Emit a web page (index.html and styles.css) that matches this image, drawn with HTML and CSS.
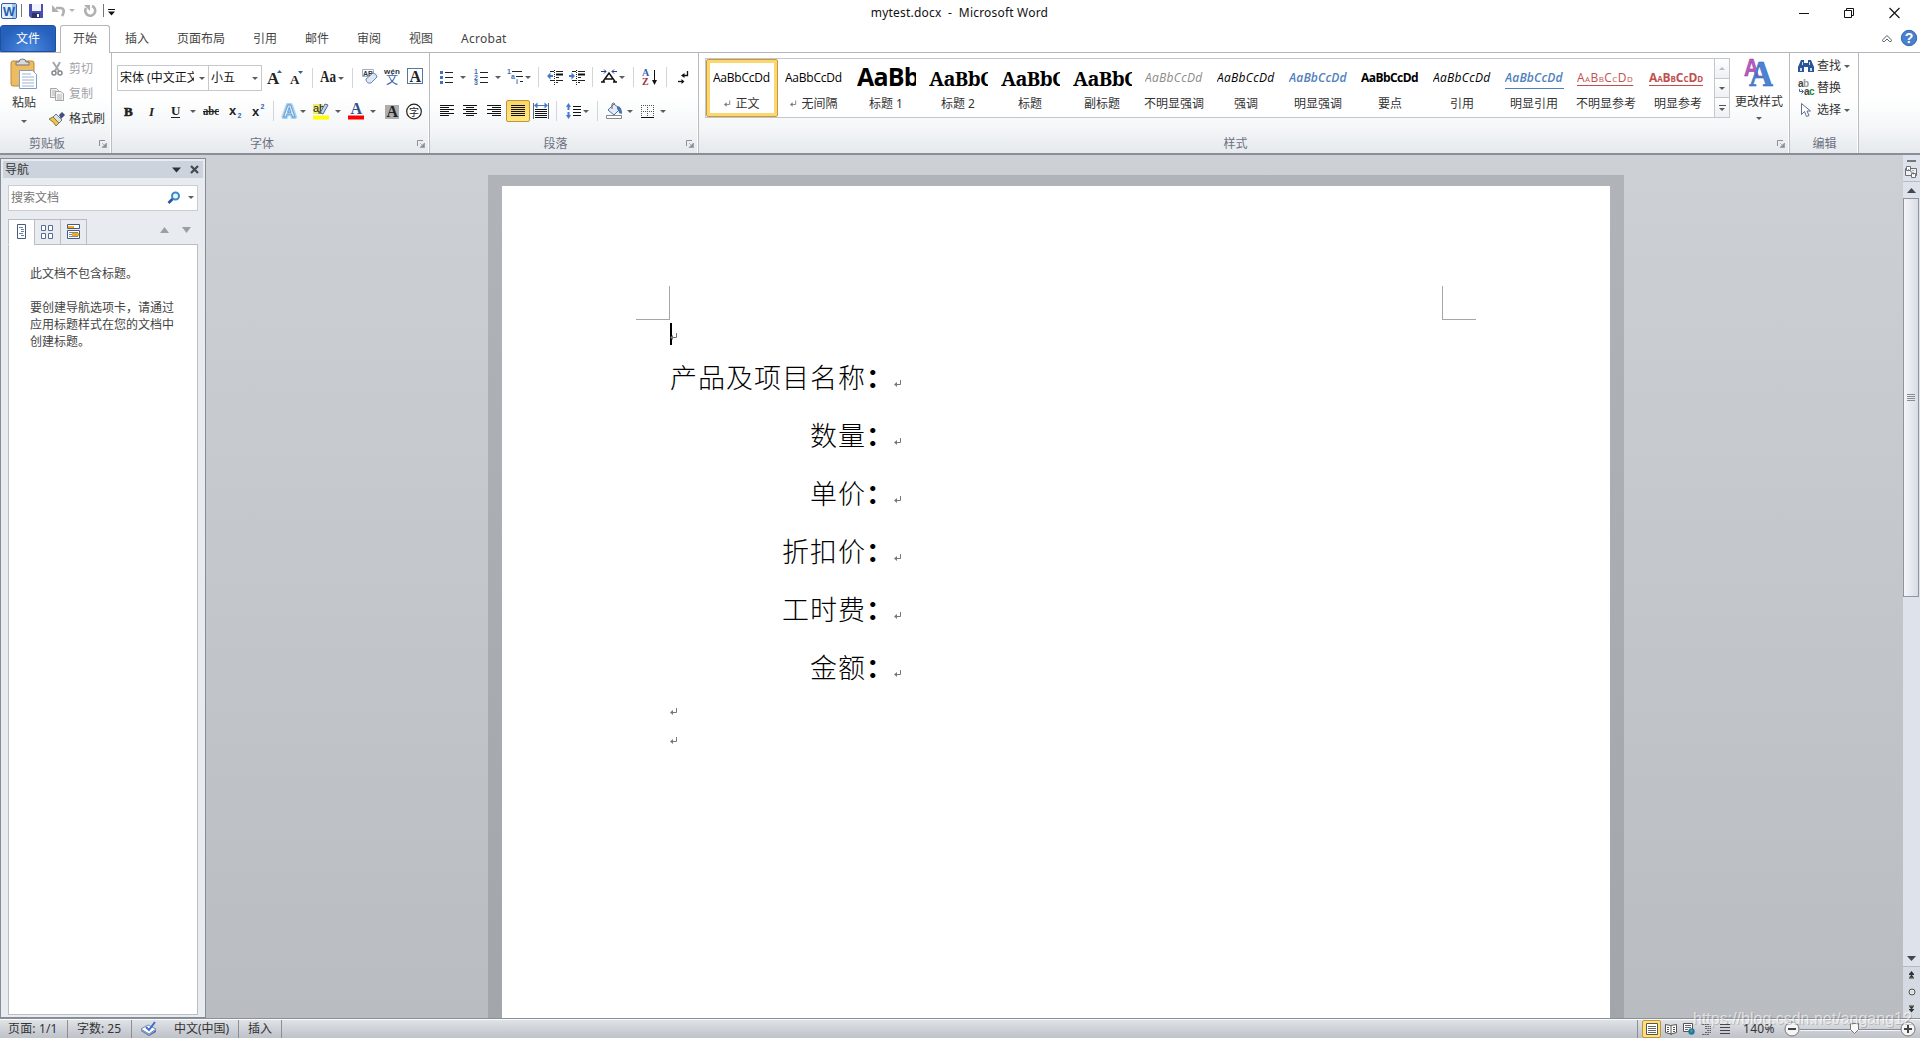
FILE: index.html
```html
<!DOCTYPE html>
<html lang="zh-CN">
<head>
<meta charset="utf-8">
<title>mytest.docx - Microsoft Word</title>
<link rel="stylesheet" href="styles.css">
</head>
<body>
<div class="app">
  <header class="titlebar">
    <div class="quick">
      <svg width="20" height="20" viewBox="0 0 20 20"><rect x="1.5" y="3.5" width="15" height="15" rx="1.5" fill="#e4effb" stroke="#2b5fad"/><path d="M12 4v14h4V4z" fill="#9ec3ec"/><text x="3" y="16" class="g-word" textLength="12" lengthAdjust="spacingAndGlyphs">W</text></svg>
      <i class="qsep"></i>
      <svg width="16" height="20" viewBox="0 0 16 20"><path d="M1 4h14v14H3l-2-2z" fill="#4a4fb4"/><path d="M4 4h9v7H4z" fill="#f2f4fc"/><path d="M4 13h8v5H4z" fill="#2f3269"/><path d="M9 14h2v3H9z" fill="#fff"/></svg>
      <svg width="16" height="20" viewBox="0 0 16 20"><path d="M5 8h4c4 0 5 3 2 8" fill="none" stroke="#b0b0b0" stroke-width="2.6"/><path d="M1 5v7h7z" fill="#b0b0b0"/></svg>
      <i class="dd pale"></i>
      <svg width="14" height="20" viewBox="0 0 14 20"><path d="M9 6a5 5 0 1 1-6 2" fill="none" stroke="#b0b0b0" stroke-width="2.6"/><path d="M1 5h6v6z" fill="#b0b0b0"/></svg>
      <i class="qsep"></i>
      <svg width="8" height="20" viewBox="0 0 8 20"><path d="M0 9.500h7" stroke="#111"/><path d="M0 11.500h7l-3.500 4z" fill="#111"/></svg>
    </div>
    <div class="title">mytest.docx&nbsp; -&nbsp; Microsoft Word</div>
    <div class="winbtns">
      <svg width="12" height="20" viewBox="0 0 12 20"><path d="M0 14.500h10" stroke="#111"/></svg>
      <svg width="12" height="20" viewBox="0 0 12 20"><path d="M.5 11.500h7v7h-7zM2.500 11v-1.500h7v7H8" fill="none" stroke="#111"/></svg>
      <svg width="12" height="20" viewBox="0 0 12 20"><path d="M.5 9l10 10M10.500 9l-10 10" stroke="#111" stroke-width="1.1"/></svg>
    </div>
  </header>

  <nav class="tabs">
    <span class="file">文件</span><span class="tab active">开始</span><span class="tab">插入</span><span class="tab">页面布局</span><span class="tab">引用</span><span class="tab">邮件</span><span class="tab">审阅</span><span class="tab">视图</span><span class="tab acro">Acrobat</span>
    <svg class="collapse" width="12" height="12" viewBox="0 0 12 12"><path d="M2 8.500q-1-1 0-2L6 2.500l4 4q1 1 0 2l-1.500 0L6 6 3.500 8.500z" fill="#fff" stroke="#555b66"/></svg>
    <svg class="help" width="18" height="18" viewBox="0 0 18 18"><circle cx="9" cy="9" r="7.700" fill="#4b80cf" stroke="#3567b4"/><text x="9" y="14" class="g-help">?</text></svg>
  </nav>

  <section class="ribbon">
    <div class="group clip">
      <div class="body">
        <div class="paste">
          <svg width="28" height="32" viewBox="0 0 28 32"><rect x="1" y="3" width="23" height="25" rx="2" fill="#eebc60" stroke="#b98a38"/><path d="M6 7V4h3q0-3 3.500-3T16 4h3v3z" fill="#d8dade" stroke="#70757c"/><path d="M9.500 12.500h13l4 4V30.500h-17z" fill="#fff" stroke="#7e9cc4"/><path d="M12 16h9M12 19h12M12 22h12M12 25h12M12 28h12" stroke="#9fb4d2"/></svg>
          <span>粘贴</span><i class="dd"></i>
        </div>
        <div class="clipcol">
          <div class="line off"><svg width="16" height="16" viewBox="0 0 16 16"><path d="M4 1l6 9M11 1L6 10" stroke="#a4a7ac" stroke-width="2"/><circle cx="5" cy="12" r="2" fill="none" stroke="#85888d" stroke-width="1.500"/><circle cx="11" cy="12" r="2" fill="none" stroke="#85888d" stroke-width="1.500"/></svg>剪切</div>
          <div class="line off"><svg width="16" height="16" viewBox="0 0 16 16"><path d="M1.500 2.500h6l2 2v7h-8z" fill="#eee" stroke="#a5a5a5"/><path d="M3 5h4M3 7h4M3 9h4" stroke="#b5b5b5"/><path d="M6.500 5.500h5l3 2v7h-8z" fill="#f4f4f4" stroke="#a5a5a5"/><path d="M8 9h5M8 11h5M8 13h5" stroke="#b5b5b5"/></svg>复制</div>
          <div class="line"><svg width="16" height="16" viewBox="0 0 16 16"><path d="M10 4l3-3 3 3-4 4z" fill="#454c80"/><path d="M7 3l6 6-3 3-6-6z" fill="#dce1ea" stroke="#777"/><path d="M4 6l6 6-3 3Q5 11 0 8z" fill="#e9c44d" stroke="#8d7a38"/></svg>格式刷</div>
        </div>
      </div>
      <div class="foot"><span>剪贴板</span><svg class="launch" width="8" height="8"><use href="#launch"/></svg></div>
    </div>

    <div class="group font">
      <div class="body rows">
        <div class="row fr1">
          <div class="combo c1"><span>宋体 (中文正文)</span><i class="dd"></i></div>
          <div class="combo c2"><span>小五</span><i class="dd"></i></div>
          <svg width="18" height="20" viewBox="0 0 18 20"><text x="0" y="16" class="g-serif s18">A</text><path d="M10 5h5l-2.500-3z" fill="#345e9e"/></svg>
          <svg width="16" height="20" viewBox="0 0 16 20"><text x="0" y="16" class="g-serif s13">A</text><path d="M8 3h5l-2.500 3z" fill="#345e9e"/></svg>
          <i class="vsep"></i>
          <svg width="18" height="20" viewBox="0 0 18 20"><text x="0" y="14" class="g-serif s15" textLength="16" lengthAdjust="spacingAndGlyphs">Aa</text></svg>
          <i class="dd"></i><i class="vsep"></i>
          <svg width="18" height="20" viewBox="0 0 18 20"><path d="M1.500 1.500h11v7h-11z" fill="#fff" stroke="#9dafca"/><text x="2" y="7.500" class="g-tiny dark">AB</text><path d="M5 11l7-6q4 1 4 4l-6 6q-4 1-5-3z" fill="#dde7f6" stroke="#6b86ae"/></svg>
          <svg width="18" height="20" viewBox="0 0 18 20"><text x="0" y="6" class="g-wen" textLength="16">wén</text><text x="2" y="16" class="g-cn blue">文</text></svg>
          <svg width="17" height="20" viewBox="0 0 17 20"><rect x=".5" y=".500" width="15" height="15" fill="#fff" stroke="#55789e"/><text x="2.500" y="13.500" class="g-serif s15">A</text></svg>
        </div>
        <div class="row fr2">
          <svg width="14" height="20" viewBox="0 0 14 20"><text x="0" y="15" class="g-serif s13 heavy">B</text></svg>
          <svg width="14" height="20" viewBox="0 0 14 20"><text x="2" y="15" class="g-serif s13 it">I</text></svg>
          <svg width="14" height="20" viewBox="0 0 14 20"><text x="0" y="14" class="g-serif s12">U</text><path d="M0 16.500h9" stroke="#222"/></svg>
          <i class="dd"></i>
          <svg width="18" height="20" viewBox="0 0 18 20"><text x="0" y="14" class="g-serif s11" textLength="16" lengthAdjust="spacingAndGlyphs">abc</text><path d="M0 10.500h16" stroke="#222"/></svg>
          <svg width="16" height="20" viewBox="0 0 16 20"><text x="0" y="14" class="g-x">x</text><text x="8.500" y="17" class="g-tiny blue">2</text></svg>
          <svg width="16" height="20" viewBox="0 0 16 20"><text x="0" y="15" class="g-x">x</text><text x="8.500" y="8" class="g-tiny blue">2</text></svg>
          <i class="vsep"></i>
          <svg width="16" height="20" viewBox="0 0 16 20"><text x="0" y="16" class="g-glow outer">A</text><text x="0" y="16" class="g-glow inner">A</text></svg>
          <i class="dd"></i>
          <svg width="18" height="20" viewBox="0 0 18 20"><path d="M0 3h10v10H0z" fill="#eeea78"/><text x="0" y="11" class="g-ab">ab</text><path d="M7 12l5-9 3 1-5 9z" fill="#c4d4ec" stroke="#496b9d"/><path d="M5 13l1-3 3 2z" fill="#555"/><path d="M0 14.500h16v4H0z" fill="#ff0"/></svg>
          <i class="dd"></i>
          <svg width="18" height="20" viewBox="0 0 18 20"><text x="2.500" y="13" class="g-serif s15 navy">A</text><path d="M0 14.500h16v4H0z" fill="#f00"/></svg>
          <i class="dd"></i>
          <svg width="16" height="20" viewBox="0 0 16 20"><path d="M0 4h14v14H0z" fill="#adadad"/><text x="1.500" y="16" class="g-serif s15">A</text></svg>
          <svg width="17" height="20" viewBox="0 0 17 20"><circle cx="8" cy="10.500" r="7.300" fill="#fff" stroke="#222" stroke-width="1.200"/><text x="3" y="14.500" class="g-cn s10">字</text></svg>
        </div>
      </div>
      <div class="foot"><span>字体</span><svg class="launch" width="8" height="8"><use href="#launch"/></svg></div>
    </div>

    <div class="group para">
      <div class="body rows">
        <div class="row pr1">
          <svg width="16" height="20" viewBox="0 0 16 20"><path d="M5 5.500h8M5 10.500h8M5 15.500h8" stroke="#222"/><path d="M0 4h3v3H0zM0 9h3v3H0zM0 14h3v3H0z" fill="#4472b8"/></svg>
          <i class="dd"></i>
          <svg width="16" height="20" viewBox="0 0 16 20"><path d="M6 5.500h8M6 10.500h8M6 15.500h8" stroke="#222"/><text x="0" y="7" class="g-num">1</text><text x="0" y="12.500" class="g-num">2</text><text x="0" y="18" class="g-num">3</text></svg>
          <i class="dd"></i>
          <svg width="17" height="20" viewBox="0 0 17 20"><path d="M5 4.500h10M9 9.500h7M13 14.500h3" stroke="#222"/><text x="0" y="7" class="g-num">1</text><text x="4" y="12" class="g-num">a</text><text x="9" y="17" class="g-num">i</text></svg>
          <i class="dd"></i><i class="vsep"></i>
          <svg width="17" height="20" viewBox="0 0 17 20"><path d="M3 4.500h4M9 4.500h7M9 10.500h3M3 13.500h4M9 13.500h7M9 15.500h2" stroke="#222"/><path d="M9 7.500h7" stroke="#111" stroke-width="2"/><path d="M7.500 3v16" stroke="#222" stroke-dasharray="1 1"/><path d="M0 9l3.500-3.500V8H6v2H3.500v2.500z" fill="#4478cc"/></svg>
          <svg width="17" height="20" viewBox="0 0 17 20"><path d="M3 4.500h4M9 4.500h7M9 10.500h3M3 13.500h4M9 13.500h7M9 15.500h2" stroke="#222"/><path d="M9 7.500h7" stroke="#111" stroke-width="2"/><path d="M7.500 3v16" stroke="#222" stroke-dasharray="1 1"/><path d="M6 9L2.500 5.500V8H0v2h2.500v2.500z" fill="#4478cc"/></svg>
          <i class="vsep"></i>
          <svg width="17" height="20" viewBox="0 0 17 20"><path d="M0 15h4M12 15h4M2 14.500L8 6l6 8.500M4.500 12h7" fill="none" stroke="#111" stroke-width="1.500"/><path d="M0 4.500h5M3 2.500l2 2-2 2M16 4.500h-5M13 2.500l-2 2 2 2" fill="none" stroke="#27398b"/></svg>
          <i class="dd"></i><i class="vsep"></i>
          <svg width="17" height="20" viewBox="0 0 17 20"><text x="0" y="9" class="g-az blue">A</text><text x="0" y="18" class="g-az red">Z</text><path d="M12.500 3v12" stroke="#111"/><path d="M10 13h5l-2.500 5z" fill="#111"/></svg>
          <i class="vsep"></i>
          <svg width="14" height="20" viewBox="0 0 14 20"><path d="M9.500 4v4.500H6" fill="none" stroke="#111" stroke-width="1.300"/><path d="M6.500 6v5L3 8.500zM3.500 12l3 2.500-3 2.500z" fill="#111"/><path d="M0 14.500h4" stroke="#111" stroke-width="1.300"/></svg>
        </div>
        <div class="row pr2">
          <svg width="16" height="20" viewBox="0 0 16 20"><path d="M0 4.500h14M0 6.500h9M0 8.500h14M0 10.500h9M0 12.500h14M0 14.500h9" stroke="#111"/></svg>
          <svg width="16" height="20" viewBox="0 0 16 20"><path d="M0 4.500h14M3 6.500h8M0 8.500h14M3 10.500h8M0 12.500h14M3 14.500h8" stroke="#111"/></svg>
          <svg width="16" height="20" viewBox="0 0 16 20"><path d="M0 4.500h14M5 6.500h9M0 8.500h14M5 10.500h9M0 12.500h14M5 14.500h9" stroke="#111"/></svg>
          <span class="pressed"><svg width="14" height="20" viewBox="0 0 14 20"><path d="M0 4.500h14M0 6.500h14M0 8.500h14M0 10.500h14M0 12.500h14M0 14.500h14" stroke="#111"/></svg></span>
          <svg width="17" height="20" viewBox="0 0 17 20"><path d="M.5 2v16M15.500 2v16" stroke="#5c6878"/><path d="M2 8.500h12M2 10.500h12M2 12.500h12M2 14.500h12M2 16.500h12" stroke="#111"/><path d="M1 4.500L4.500 1.500V4h7V1.500L15 4.500l-3.500 3V5h-7v2.500z" fill="#4478cc"/></svg>
          <i class="vsep"></i>
          <svg width="16" height="20" viewBox="0 0 16 20"><path d="M7 5.500h8M7 8.500h8M7 11.500h8M7 14.500h8" stroke="#111"/><path d="M0 6l2.500-4L5 6H3.500v3h-2V6zM0 14l2.500 4L5 14H3.500v-3h-2v3z" fill="#4478cc"/></svg>
          <i class="dd"></i><i class="vsep"></i>
          <svg width="17" height="20" viewBox="0 0 17 20"><path d="M2 9l6-6 6 5-6 6z" fill="#e3ebf8" stroke="#54719d"/><path d="M6 8V3q1-2 3 0" fill="none" stroke="#666"/><path d="M11 5q5 0 5 8l-3-1q0-3-2-4z" fill="#4773b5"/><path d="M.5 14.500h15v3H.5z" fill="#fff" stroke="#888"/></svg>
          <i class="dd"></i>
          <svg width="14" height="20" viewBox="0 0 14 20"><path d="M0 4.500h13M0 10.500h13M.5 4v12M6.500 4v12M12.500 4v12" stroke="#555" stroke-dasharray="1 1"/><path d="M0 16.500h13" stroke="#111"/></svg>
          <i class="dd"></i>
        </div>
      </div>
      <div class="foot"><span>段落</span><svg class="launch" width="8" height="8"><use href="#launch"/></svg></div>
    </div>

    <div class="group styles">
      <div class="body">
        <div class="gallery">
          <div class="style sel"><div class="pv">AaBbCcDd</div><div class="nm"><svg width="7" height="8"><use href="#ret"/></svg> 正文</div></div>
          <div class="style"><div class="pv">AaBbCcDd</div><div class="nm"><svg width="7" height="8"><use href="#ret"/></svg> 无间隔</div></div>
          <div class="style"><div class="pv h1">AaBb</div><div class="nm">标题 1</div></div>
          <div class="style"><div class="pv h2">AaBbC</div><div class="nm">标题 2</div></div>
          <div class="style"><div class="pv h2">AaBbC</div><div class="nm">标题</div></div>
          <div class="style"><div class="pv h2">AaBbC</div><div class="nm">副标题</div></div>
          <div class="style"><div class="pv ital gray">AaBbCcDd</div><div class="nm">不明显强调</div></div>
          <div class="style"><div class="pv ital">AaBbCcDd</div><div class="nm">强调</div></div>
          <div class="style"><div class="pv ital bold bluet">AaBbCcDd</div><div class="nm">明显强调</div></div>
          <div class="style"><div class="pv bold">AaBbCcDd</div><div class="nm">要点</div></div>
          <div class="style"><div class="pv ital">AaBbCcDd</div><div class="nm">引用</div></div>
          <div class="style"><div class="pv ital bold bluet ruled">AaBbCcDd</div><div class="nm">明显引用</div></div>
          <div class="style"><div class="pv caps redt">AaBbCcDd</div><div class="nm">不明显参考</div></div>
          <div class="style"><div class="pv caps bold redt">AaBbCcDd</div><div class="nm">明显参考</div></div>
          <div class="gscroll"><b><i class="up"></i></b><b><i class="dd"></i></b><b class="more"><i class="dd"></i></b></div>
        </div>
        <div class="change">
          <svg width="32" height="32" viewBox="0 0 32 32"><text x="1" y="18" class="g-chg pink" textLength="15" lengthAdjust="spacingAndGlyphs">A</text><text x="6" y="28" class="g-chg big" textLength="24" lengthAdjust="spacingAndGlyphs">A</text></svg>
          <span>更改样式</span><i class="dd"></i>
        </div>
      </div>
      <div class="foot"><span>样式</span><svg class="launch" width="8" height="8"><use href="#launch"/></svg></div>
    </div>

    <div class="group edit">
      <div class="body">
        <div class="line"><svg width="16" height="16" viewBox="0 0 16 16"><path d="M3 2h3v3h4V2h3l3 7v5h-6V9H6v5H0V9z" fill="#2c5597"/><path d="M2 10h2v3H2zM12 10h2v3h-2zM4 4h1v3H4zM11 4h1v3h-1z" fill="#c9dcf5"/></svg>查找<i class="dd"></i></div>
        <div class="line"><svg width="16" height="16" viewBox="0 0 16 16"><text x="0" y="7" class="g-rep">a</text><text x="5" y="7" class="g-rep lt">b</text><text x="6" y="15" class="g-rep">a</text><text x="11" y="15" class="g-rep gr">c</text><path d="M1.500 9v2.500H5M3.500 9.500l2 2-2 2" fill="none" stroke="#3768a8"/></svg>替换</div>
        <div class="line"><svg width="16" height="16" viewBox="0 0 16 16"><path d="M3.500 1.500v11l3-3 2 5 2.500-1-2-4.500h3.500z" fill="#fff" stroke="#5f7090"/></svg>选择<i class="dd"></i></div>
      </div>
      <div class="foot"><span>编辑</span></div>
    </div>
    <div class="rest"></div>
  </section>

  <main class="work">
    <aside class="nav">
      <div class="nhead"><span>导航</span><svg width="10" height="10" viewBox="0 0 10 10"><path d="M0 2.500h9L4.500 7.500z" fill="#2e3238"/></svg><svg width="10" height="10" viewBox="0 0 10 10"><path d="M1 1l7 7M8 1l-7 7" stroke="#44484f" stroke-width="2.200"/></svg></div>
      <div class="search"><span>搜索文档</span><svg width="14" height="14" viewBox="0 0 14 14"><circle cx="8.500" cy="5" r="3.500" fill="#e7f5ff" stroke="#3a8ac8" stroke-width="2"/><path d="M5.500 8L1.500 12" stroke="#2b5499" stroke-width="2.600"/></svg><i class="dd"></i></div>
      <div class="ntabs">
        <b class="on"><svg width="10" height="16" viewBox="0 0 10 16"><path d="M.5.500h8v14h-8z" fill="#fff" stroke="#4a5a7c"/><path d="M2 3.500h4M4 5.500h3M4 7.500h3M2 9.500h4M4 11.500h3" stroke="#6d7f9f"/></svg></b>
        <b><svg width="13" height="15" viewBox="0 0 13 15"><path d="M.5.500h4v5h-4zM7.500.500h4v5h-4zM.5 8.500h4v5h-4zM7.500 8.500h4v5h-4z" fill="#fff" stroke="#566a92"/></svg></b>
        <b><svg width="14" height="16" viewBox="0 0 14 16"><path d="M.5.500h12v4H.5zM.5 6.500h12v8H.5z" fill="#fff" stroke="#4a5a7c"/><path d="M1 2h6v2H1zM5 9h7v3H5z" fill="#f1ac1c"/><path d="M2 8.500h9M2 10.500h3M2 12.500h9" stroke="#7587a5"/></svg></b>
        <svg class="nup" width="10" height="8" viewBox="0 0 10 8"><path d="M0 7l4.500-6L9 7z" fill="#9b9ea3"/></svg><svg class="ndn" width="10" height="8" viewBox="0 0 10 8"><path d="M0 1h9L4.500 7z" fill="#9b9ea3"/></svg>
      </div>
      <div class="ncontent"><p>此文档不包含标题。</p><p>要创建导航选项卡，请通过应用标题样式在您的文档中创建标题。</p></div>
    </aside>
    <div class="canvas">
      <div class="shade"><article class="page">
        <div class="marks"><i class="ml"></i><i class="mr"></i></div>
        <div class="first"><i class="caret"></i><svg width="8" height="8"><use href="#ret"/></svg></div>
        <div class="entry"><span>产品及项目名称<b>：</b></span><svg width="8" height="8"><use href="#ret"/></svg></div>
        <div class="entry"><span>数量<b>：</b></span><svg width="8" height="8"><use href="#ret"/></svg></div>
        <div class="entry"><span>单价<b>：</b></span><svg width="8" height="8"><use href="#ret"/></svg></div>
        <div class="entry"><span>折扣价<b>：</b></span><svg width="8" height="8"><use href="#ret"/></svg></div>
        <div class="entry"><span>工时费<b>：</b></span><svg width="8" height="8"><use href="#ret"/></svg></div>
        <div class="entry"><span>金额<b>：</b></span><svg width="8" height="8"><use href="#ret"/></svg></div>
        <div class="blank"><svg width="8" height="8"><use href="#ret"/></svg></div>
        <div class="blank"><svg width="8" height="8"><use href="#ret"/></svg></div>
      </article></div>
    </div>
    <div class="vbar">
      <div class="ruler"><svg width="17" height="24" viewBox="0 0 17 24"><path d="M4 3h9v2H4z" fill="#74787e"/><path d="M2.500 11.500h11v7h-11z" fill="#f3eef1" stroke="#6c7077"/><path d="M3.500 9.500h4v4h-4zM8.500 16.500h4v4h-4z" fill="#fff" stroke="#6c7077"/><path d="M5 12l6 6M8 14v2M10 13v3" stroke="#6c7077" stroke-dasharray="1 1"/></svg></div>
      <div class="arrow"><svg width="9" height="5" viewBox="0 0 9 5"><path d="M0 5l4.500-5L9 5z" fill="#42464d"/></svg></div>
      <div class="thumb"><i></i><i></i><i></i><i></i></div>
      <div class="track"></div>
      <div class="arrow down"><svg width="9" height="5" viewBox="0 0 9 5"><path d="M0 0h9L4.500 5z" fill="#42464d"/></svg></div>
      <div class="browse">
        <svg width="7" height="8" viewBox="0 0 7 8"><path d="M1 3l2.500-3L6 3zM1 6.500l2.500-3 2.500 3z" fill="#333"/><path d="M1 3.500h5M1 7h5" stroke="#333"/></svg>
        <svg width="8" height="8" viewBox="0 0 8 8"><circle cx="4" cy="4" r="3" fill="#e0e0e0" stroke="#555"/></svg>
        <svg width="7" height="8" viewBox="0 0 7 8"><path d="M1 1.500l2.500 3 2.500-3zM1 4.500l2.500 3 2.500-3z" fill="#333"/><path d="M1 1h5M1 4.500h5" stroke="#333"/></svg>
      </div>
    </div>
  </main>

  <footer class="status">
    <span class="s1">页面: 1/1</span><span class="s2">字数: 25</span>
    <span class="s3"><svg width="17" height="17" viewBox="0 0 17 17"><path d="M1 9l7-4 8 4-7 5z" fill="#fff" stroke="#7486a8"/><path d="M1 10l8 5 7-5v2l-7 4-8-5z" fill="#4669ad"/><path d="M6 7l3 3 6-8" fill="none" stroke="#3a6fd0" stroke-width="2"/></svg>中文(中国)</span><span class="s4">插入</span>
    <div class="views">
      <b class="on"><svg width="12" height="12" viewBox="0 0 12 12"><path d="M.5.500h11v11H.5z" fill="#fff" stroke="#555"/><path d="M2 3.500h8M2 5.500h8M2 7.500h8M2 9.500h8" stroke="#666"/></svg></b>
      <svg width="12" height="12" viewBox="0 0 12 12"><path d="M.5 1.500l5 1 6-1v8l-5.500 1.500L.5 9.500zM6 2.500V12" fill="#fff" stroke="#555"/><path d="M2 4.500h2M2 6.500h2M2 8.500h2M8 4.500h2M8 6.500h2M8 8.500h2" stroke="#555"/></svg>
      <svg width="12" height="12" viewBox="0 0 12 12"><path d="M.5.500h9v8H.5z" fill="#fff" stroke="#555"/><path d="M2 2.500h6M2 4.500h6M2 6.500h3" stroke="#666"/><circle cx="8.500" cy="8.500" r="3.200" fill="#2673ac"/><path d="M8 6l2 2-3 2z" fill="#4fb05d"/></svg>
      <svg width="12" height="12" viewBox="0 0 12 12"><path d="M1 1.500h7M4 3.500h6M4 5.500h6M6 7.500h4M4 9.500h6M1 11.500h7" stroke="#666" stroke-dasharray="2 .5"/></svg>
      <svg width="12" height="12" viewBox="0 0 12 12"><path d="M1 1.500h10M1 4.500h10M1 7.500h10M1 10.500h10" stroke="#444"/></svg>
      <span>140%</span>
      <svg class="slider" width="126" height="18" viewBox="0 0 126 18"><path d="M17 9.500h101" stroke="#858a91"/><path d="M17 10.500h101" stroke="#f5f6f8"/><circle cx="9" cy="9" r="7" fill="#f5f5f5" stroke="#777"/><path d="M5 9h8" stroke="#444" stroke-width="2"/><path d="M67.500 3.500h8v6l-4 4-4-4z" fill="#fafafa" stroke="#777"/><circle cx="125" cy="9" r="7" fill="#f5f5f5" stroke="#777"/><path d="M121 9h8M125 5v8" stroke="#444" stroke-width="2"/></svg>
    </div>
  </footer>
  <div class="watermark">https://blog.csdn.net/angang12</div>
</div>

<svg class="defs" width="0" height="0">
  <symbol id="launch" viewBox="0 0 8 8"><path d="M.5 6V.500H6" fill="none" stroke="#8b8f96"/><path d="M3 3l3 3M7.500 3v4.500H3z" fill="#8b8f96" stroke="#8b8f96" stroke-width=".6"/></symbol>
  <symbol id="ret" viewBox="0 0 8 8"><path d="M6.500 0v4.500H2" fill="none" stroke="#777"/><path d="M0 4.500l3-2.500v5z" fill="#777"/></symbol>
</svg>
</body>
</html>
```
FILE: styles.css
```css
* { box-sizing: border-box; }
body { margin: 0; overflow: hidden; font: 12px/16px "Noto Sans", "Noto Sans CJK SC", sans-serif; color: #333; background: #fff; }
svg { display: block; flex: none; overflow: visible; }
i { font-style: normal; display: block; flex: none; }
b { font-weight: 400; }
.app { width: 1920px; height: 1038px; display: flex; flex-direction: column; position: relative; overflow: hidden; }
.defs { position: absolute; }

/* dropdown triangles */
.dd { width: 0; height: 0; border: 3px solid transparent; border-top: 3px solid #5c5c5c; border-bottom: 0; }
.dd.pale { border-top-color: #b5b5b5; }
.up { width: 0; height: 0; border: 3px solid transparent; border-bottom: 3px solid #bbb; border-top: 0; }

/* title bar */
.titlebar { height: 25px; display: grid; grid-template-columns: 860px 199px 1fr; align-items: start; }
.quick { display: grid; grid-template-columns: 21px 7px 23px 18px 14px 20px 5px 10px; align-items: center; height: 20px; }
.quick svg { align-self: start; }
.qsep { width: 1px; height: 13px; background: #777; }
.title { text-align: center; color: #111; height: 25px; line-height: 25px; white-space: nowrap; letter-spacing: .2px; }
.winbtns { display: flex; justify-content: flex-end; gap: 33px; padding-right: 19px; margin-top: -1px; }

/* tabs */
.tabs { height: 28px; display: flex; align-items: stretch; color: #444; line-height: 27px; border-bottom: 1px solid #b3b7bd; }
.file { width: 56px; height: 27px; text-align: center; color: #fff; border: 1px solid #1f4fa0; border-radius: 3px 3px 0 0; background: radial-gradient(ellipse at 50% 100%, #4d8be0, #2660bd 75%); line-height: 26px; }
.tab { padding: 0 14px; }
.tab.active { width: 50px; height: 28px; margin: 0 1px 0 4px; padding: 0 12px; border: 1px solid #b3b7bd; border-bottom: 0; border-radius: 3px 3px 0 0; background: #fff; line-height: 26px; }
.acro { margin-right: auto; letter-spacing: .25px; }
.collapse { margin: 8px 7px 0 0; }
.help { margin: 4px 2px 0 0; }

/* ribbon */
.ribbon { height: 102px; display: flex; border-bottom: 2px solid #8a8f97; background: linear-gradient(#fff 0, #fff 45%, #f4f6f8 75%, #e6e9ed); }
.group { display: flex; flex-direction: column; flex: none; border-right: 1px solid #b9bdc2; box-shadow: inset -1px 0 #fff; }
.body { height: 80px; display: flex; }
.foot { height: 20px; display: flex; justify-content: center; line-height: 21px; color: #6b7180; position: relative; padding-right: 17px; }
.edit .foot { padding: 0 0 0 1px; }
.launch { position: absolute; right: 4px; top: 7px; }
.clip { width: 112px; }
.font { width: 318px; }
.para { width: 269px; }
.styles { width: 1091px; }
.edit { width: 69px; }
.paste { width: 48px; display: flex; flex-direction: column; align-items: center; padding: 5px 0 0 0; }
.paste span { margin: 5px 0 9px; }
.clipcol { padding-top: 8px; display: flex; flex-direction: column; gap: 9px; padding-left: 1px; }
.line { display: flex; align-items: center; gap: 4px; height: 16px; white-space: nowrap; }
.off { color: #a0a3a8; }
.rows { flex-direction: column; }
.row { display: grid; align-items: center; justify-items: start; }
.vsep { width: 1px; height: 20px; background: #d2d5d9; }
.combo { height: 26px; border: 1px solid #c5c8cd; background: #fff; display: flex; align-items: center; justify-content: space-between; padding: 0 3px 0 2px; color: #111; }
.combo span { overflow: hidden; white-space: nowrap; width: 74px; }
.c1 { width: 92px; }
.c2 { width: 54px; }
.c2 span { width: 30px; }
.fr1 { height: 50px; padding-left: 5px; grid-template-columns: 91px 59px 23px 22px 8px 18px 14px 9px 23px 23px 17px; }
.fr2 { height: 20px; margin-top: -2px; padding-left: 12px; grid-template-columns: 23px 24px 19px 13px 26px 23px 21px 10px 17px 13px 22px 13px 22px 15px 21px 17px; }
.pr1 { height: 50px; padding-left: 10px; margin-top: -1px; grid-template-columns: 20px 14px 21px 12px 18px 13px 9px 22px 23px 9px 18px 14px 9px 24px 12px 14px; }
.pr2 { height: 22px; margin-top: -2px; padding-left: 10px; grid-template-columns: 23px 24px 19px 27px 23px 10px 17px 14px 9px 21px 14px 19px 8px; }
.pressed { width: 24px; height: 22px; border: 1px solid #c29435; border-radius: 2px; background: linear-gradient(#f9d567, #ffe783); display: flex; justify-content: center; }

.styles .body { padding: 5px 0 0 6px; }
.gallery { display: flex; width: 1025px; height: 60px; border: 1px solid #c3c6ca; background: #fff; }
.style { width: 72px; height: 58px; flex: none; text-align: center; }
.style.sel { border: 1px solid #c99740; border-radius: 2px; box-shadow: inset 0 0 0 3px #fbd770; }
.style.sel .pv { margin-left: 6px; margin-top: 5px; }
.pv { width: 59px; height: 29px; margin: 6px auto 0 7px; overflow: hidden; white-space: nowrap; color: #000; font: 12px/26px "Open Sans", "Noto Sans", sans-serif; letter-spacing: -.22px; text-align: left; }
.pv.h1 { font: bold 25px/23px "Open Sans", sans-serif; letter-spacing: -.8px; }
.pv.h2 { font: bold 20px/27px "Noto Serif", "Liberation Serif", serif; letter-spacing: -.6px; }
.pv.ital { font-style: italic; letter-spacing: .3px; }
.pv.bold { font-weight: 700; letter-spacing: -.55px; }
.pv.ital.bold { font-weight: 600; letter-spacing: .15px; }
.pv.gray { color: #8b8b8b; }
.pv.bluet { color: #4f81bd; }
.pv.redt { color: #c0504d; }
.pv.ruled { height: 24px; margin-bottom: 5px; border-bottom: 1px solid #4f81bd; }
.pv.caps { font-variant: small-caps; letter-spacing: .45px; text-decoration: underline; text-underline-offset: 3px; }
.pv.caps.bold { letter-spacing: -.1px; }
.nm { display: flex; justify-content: center; align-items: center; gap: 4px; height: 20px; color: #333; white-space: nowrap; }
.gscroll { width: 15px; display: flex; flex-direction: column; }
.gscroll b { flex: 1; display: flex; align-items: center; justify-content: center; border: 0 solid #c3c6ca; border-width: 0 0 1px 1px; background: linear-gradient(#fff, #eef0f3); }
.gscroll b:last-child { border-bottom: 0; }
.gscroll .more { flex-direction: column; gap: 2px; }
.more::before { content: ""; width: 7px; height: 1px; background: #555; }
.change { width: 58px; display: flex; flex-direction: column; align-items: center; }
.change span { margin: 4px 0 7px; }
.edit .body { flex-direction: column; gap: 6px; padding: 5px 0 0 8px; }
.edit .line { gap: 3px; }

/* workspace */
.work { flex: 1; min-height: 0; display: flex; background: linear-gradient(#cdd0d5, #b9bcc1); }
.nav { width: 206px; margin-top: 3px; height: 860px; border: 1px solid #878b93; background: #e8ecf1; padding: 2px; display: flex; flex-direction: column; }
.nhead { height: 17px; background: #cdd3dc; display: flex; align-items: center; padding: 0 3px 0 2px; gap: 8px; }
.nhead span { margin-right: auto; }
.search { margin: 7px 5px 0; height: 26px; flex: none; border: 1px solid #c9ccd1; background: #fff; display: flex; align-items: center; gap: 7px; padding: 0 3px 1px 2px; color: #777; }
.search span { margin-right: auto; }
.ntabs { height: 26px; flex: none; display: flex; margin: 8px 5px -1px; position: relative; align-items: center; z-index: 1; }
.ntabs b { width: 27px; height: 26px; margin-right: -1px; border: 1px solid #babdc2; display: flex; align-items: center; justify-content: center; }
.ntabs b.on { background: #fff; border-bottom-color: #fff; }
.nup { margin-left: auto; margin-top: -4px; }
.ndn { margin: -4px 6px 0 12px; }
.ncontent { flex: 1; margin: 0 5px; border: 1px solid #babdc2; background: #fff; padding: 20px 17px 0 21px; line-height: 17px; color: #444; }
.ncontent p { margin: 0 0 17px; width: 146px; }
.canvas { flex: 1; display: flex; padding: 20px 279px 0 282px; }
.shade { flex: 1; background: linear-gradient(#b0b4b8, #a2a6aa); padding: 11px 14px 0; }
.page { height: 100%; background: #fff; padding: 100px 134px 0; }
.marks { height: 34px; display: flex; justify-content: space-between; }
.marks i { width: 34px; border-bottom: 1px solid #a6a6a6; }
.ml { border-right: 1px solid #a6a6a6; }
.mr { border-left: 1px solid #a6a6a6; }
.first { height: 28px; margin-left: 34px; padding-top: 3px; display: flex; }
.first svg { margin: 10px 0 0 -2px; }
.caret { width: 2px; height: 22px; background: #000; }
.entry { height: 58.1px; width: 268px; margin-left: 34px; display: flex; justify-content: space-between; color: #000; font: 300 27px/57px "Noto Sans CJK SC", sans-serif; letter-spacing: 1px; }
.entry span { width: 225px; text-align: right; white-space: nowrap; }
.entry b { font-weight: 700; }
.entry svg { margin: 32px 36px 0 0; }
.blank { height: 29px; margin-left: 34px; padding-top: 11px; }
.vbar { width: 17px; display: flex; flex-direction: column; background: #dde2eb; }
.ruler { height: 27px; padding-top: 2px; border-bottom: 1px solid #b6bac1; }
.arrow { height: 16px; display: flex; justify-content: center; align-items: center; }
.thumb { height: 399px; width: 16px; border: 1px solid #8d95a0; background: linear-gradient(90deg, #f3f5fa, #d9dce4); display: flex; flex-direction: column; align-items: center; justify-content: center; gap: 1px; }
.thumb i { width: 8px; height: 1px; background: #888c93; }
.track { flex: 1; }
.arrow.down { border-bottom: 1px solid #b6bac1; }
.browse { height: 51px; background: #d5dae2; display: flex; flex-direction: column; align-items: center; justify-content: space-between; padding: 4px 0 5px; }

/* status bar */
.status { height: 20px; flex: none; display: flex; align-items: center; border-top: 1px solid #8b8f96; box-shadow: inset 0 1px #f9fafb; background: linear-gradient(#e1e4e8, #bec2c9); color: #333; }
.status > span { display: flex; align-items: center; height: 18px; border-right: 1px solid #8a8e95; white-space: nowrap; }
.s1 { width: 68px; padding-left: 8px; letter-spacing: .15px; }
.s2 { width: 64px; padding-left: 9px; }
.s3 { width: 107px; padding-left: 8px; gap: 17px; }
.s4 { width: 43px; padding-left: 9px; }
.views { margin-left: auto; width: 283px; height: 18px; border-left: 1px solid #8a8e95; padding-left: 4px; display: flex; align-items: center; }
.views .on { width: 19px; height: 18px; margin-right: 4px; background: #ffe07a; border: 1px solid #c29435; border-radius: 2px; display: flex; align-items: center; justify-content: center; }
.views > svg { margin-right: 6px; }
.views span { margin-left: 6px; width: 40px; letter-spacing: .3px; }
.watermark { position: absolute; left: 1693px; top: 1009px; font: 16px/20px "Liberation Sans", sans-serif; color: rgba(255,255,255,.6); text-shadow: 1px 1px rgba(90,90,90,.3); white-space: nowrap; }

/* lettered icons */
.g-word { font: 900 13px "Liberation Sans", sans-serif; fill: #245eae; }
.g-help { font: bold 14px "Liberation Sans", sans-serif; fill: #fff; text-anchor: middle; }
.g-serif { font-family: "Liberation Serif", serif; font-weight: 700; fill: #222; }
.s18 { font-size: 17px; }
.s15 { font-size: 16px; }
.s13 { font-size: 13px; }
.s12 { font-size: 13px; }
.s11 { font-size: 12px; }
.heavy { stroke: #222; stroke-width: .6; }
.it { font-style: italic; }
.g-tiny { font: bold 7px "Liberation Sans", sans-serif; fill: #333; }
.g-wen { font: bold 8px "Liberation Sans", sans-serif; fill: #333; }
.g-cn { font-family: "Noto Sans CJK SC", sans-serif; font-size: 12px; fill: #222; }
.g-cn.s10 { font-size: 10px; }
.g-x { font: bold 13px "Liberation Sans", sans-serif; fill: #222; }
.g-glow { font: bold 17px "Liberation Sans", sans-serif; }
.g-glow.outer { fill: none; stroke: #a9d3f3; stroke-width: 4px; stroke-linejoin: round; }
.g-glow.inner { fill: #fff; stroke: #5b9ad1; stroke-width: 1px; }
.g-ab { font: 11px "Liberation Sans", sans-serif; fill: #222; }
.g-num { font: bold 7px "Liberation Sans", sans-serif; fill: #3d6db5; }
.g-az { font: bold 10px "Liberation Serif", serif; }
.g-rep { font: bold 10px "Liberation Sans", sans-serif; fill: #444; }
.g-rep.lt { fill: #999; }
.g-rep.gr { fill: #198a2a; }
.g-chg { font: bold 25px "Liberation Serif", serif; fill: #4c82d5; stroke: #2f61ad; stroke-width: .5; }
.g-chg.pink { font: bold 24px "Liberation Sans", sans-serif; fill: #b75bc3; stroke: #8b3898; }
.g-chg.big { font-size: 35px; }
.blue { fill: #345fae; }
.red { fill: #9c3038; }
.navy { fill: #2e4f8c; }
```
